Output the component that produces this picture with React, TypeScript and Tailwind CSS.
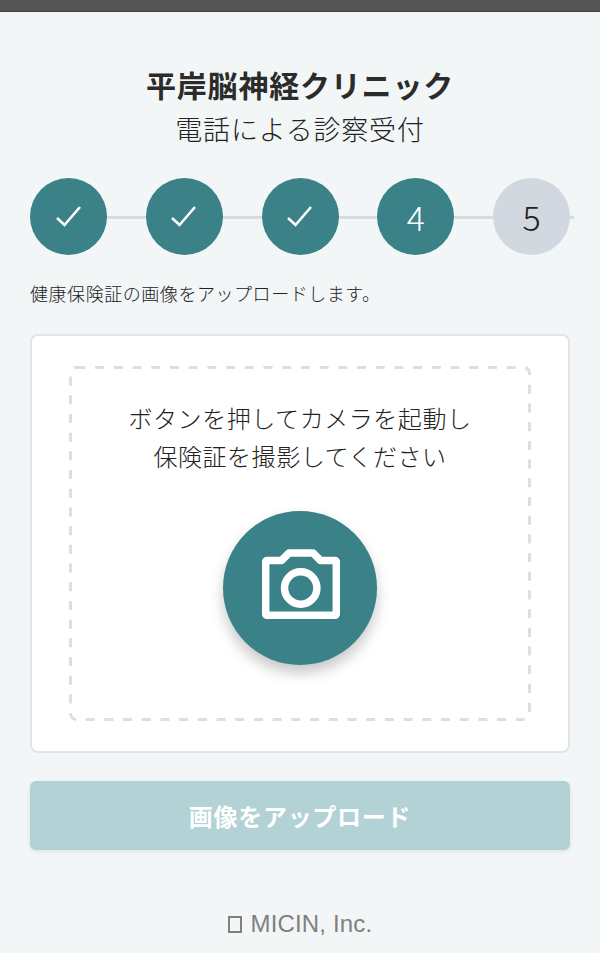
const steps = [
  { label: '', done: true },
  { label: '', done: true },
  { label: '', done: true },
  { label: '4', done: true },
  { label: '5', done: false },
]

function Check() {
  return (
    <svg width="28" height="24" viewBox="0 0 28 24" fill="none" stroke="white" strokeWidth="2.6">
      <polyline points="2,13 9.5,20 25,2" />
    </svg>
  )
}

function CameraIcon() {
  return (
    <svg width="78" height="70" viewBox="0 0 78 70" fill="none" stroke="white" strokeWidth="7.5" strokeLinejoin="round">
      <path d="M5 11.5H19.5L27 4H51L58.5 11.5H73C73.8 11.5 74.3 12 74.3 12.8V65C74.3 65.8 73.8 66.2 73 66.2H5C4.2 66.2 3.7 65.8 3.7 65V12.8C3.7 12 4.2 11.5 5 11.5Z" />
      <circle cx="38.7" cy="39" r="16.2" />
    </svg>
  )
}

export default function App() {
  return (
    <div className="w-[600px] h-[953px] overflow-hidden bg-[#f2f6f7] text-[#222] font-['Noto_Sans_CJK_JP','Noto_Sans',sans-serif]">
      <div className="h-3 bg-[#555555] border-b border-[#3f3f3f]" />

      <header className="pt-[51px] text-center">
        <h1 className="text-[30px] leading-[42px] font-bold text-[#2b2b2b] tracking-[0.8px]">平岸脳神経クリニック</h1>
        <p className="mt-[5px] text-[27px] leading-[38px] font-light tracking-[0.8px]">電話による診察受付</p>
      </header>

      {/* Stepper */}
      <div className="flex mt-[30px] pl-[30px]">
        {steps.map((step, i) => (
          <div key={i} className="flex items-center shrink-0 w-[115.75px]">
            <div
              className={`w-[77px] h-[77px] shrink-0 rounded-full flex items-center justify-center text-[34px] font-light ${
                step.done ? 'bg-[#3a8188] text-white' : 'bg-[#d2d8e0] text-[#222]'
              }`}
            >
              {step.label ? step.label : <Check />}
            </div>
            <div className={`h-[3px] mt-[2px] bg-[#d6dde1] ${i === 4 ? 'w-[4px]' : 'flex-1'}`} />
          </div>
        ))}
      </div>

      <p className="mt-[25px] px-[30px] text-[18px] leading-[27px] font-light tracking-[0.55px]">健康保険証の画像をアップロードします。</p>

      <main className="mt-[27px] mx-[30px]">
        <div className="h-[419px] bg-white border-2 border-[#e2e4e5] rounded-lg px-[37px] pt-[30px]">
          <div className="relative h-[355px] flex flex-col items-center pt-[33px]">
            {/* dashed frame: Chrome's border-dashed gives shorter dashes than the picture */}
            <svg className="absolute inset-0 w-full h-full" fill="none">
              <rect x="1.5" y="1.5" width="459" height="352" rx="6" stroke="#dedede" strokeWidth="3" strokeDasharray="9 9.7" />
            </svg>
            <p className="text-[24px] leading-[38px] text-center font-light tracking-[0.55px]">
              ボタンを押してカメラを起動し
              <br />
              保険証を撮影してください
            </p>
            <button className="mt-[36px] w-[154px] h-[154px] pb-2 pl-[2px] rounded-full bg-[#3a8188] flex items-center justify-center shadow-[0_8px_14px_rgba(0,0,0,0.22)]">
              <CameraIcon />
            </button>
          </div>
        </div>

        <button className="block mt-[28px] w-full h-[69px] rounded-md bg-[#b2d2d5] text-white text-[24px] font-bold tracking-[0.7px] shadow-[0_2px_5px_rgba(0,0,0,0.08)]">
          画像をアップロード
        </button>
      </main>

      <footer className="mt-[57px] text-center text-[24px] leading-[34px] text-[#808080] tracking-[0.15px] font-['Liberation_Sans',sans-serif]">
        <span className="inline-block w-[14px] h-[17px] mr-[2px] align-[-1px] border-2 border-[#808080]" /> MICIN, Inc.
      </footer>
    </div>
  )
}
